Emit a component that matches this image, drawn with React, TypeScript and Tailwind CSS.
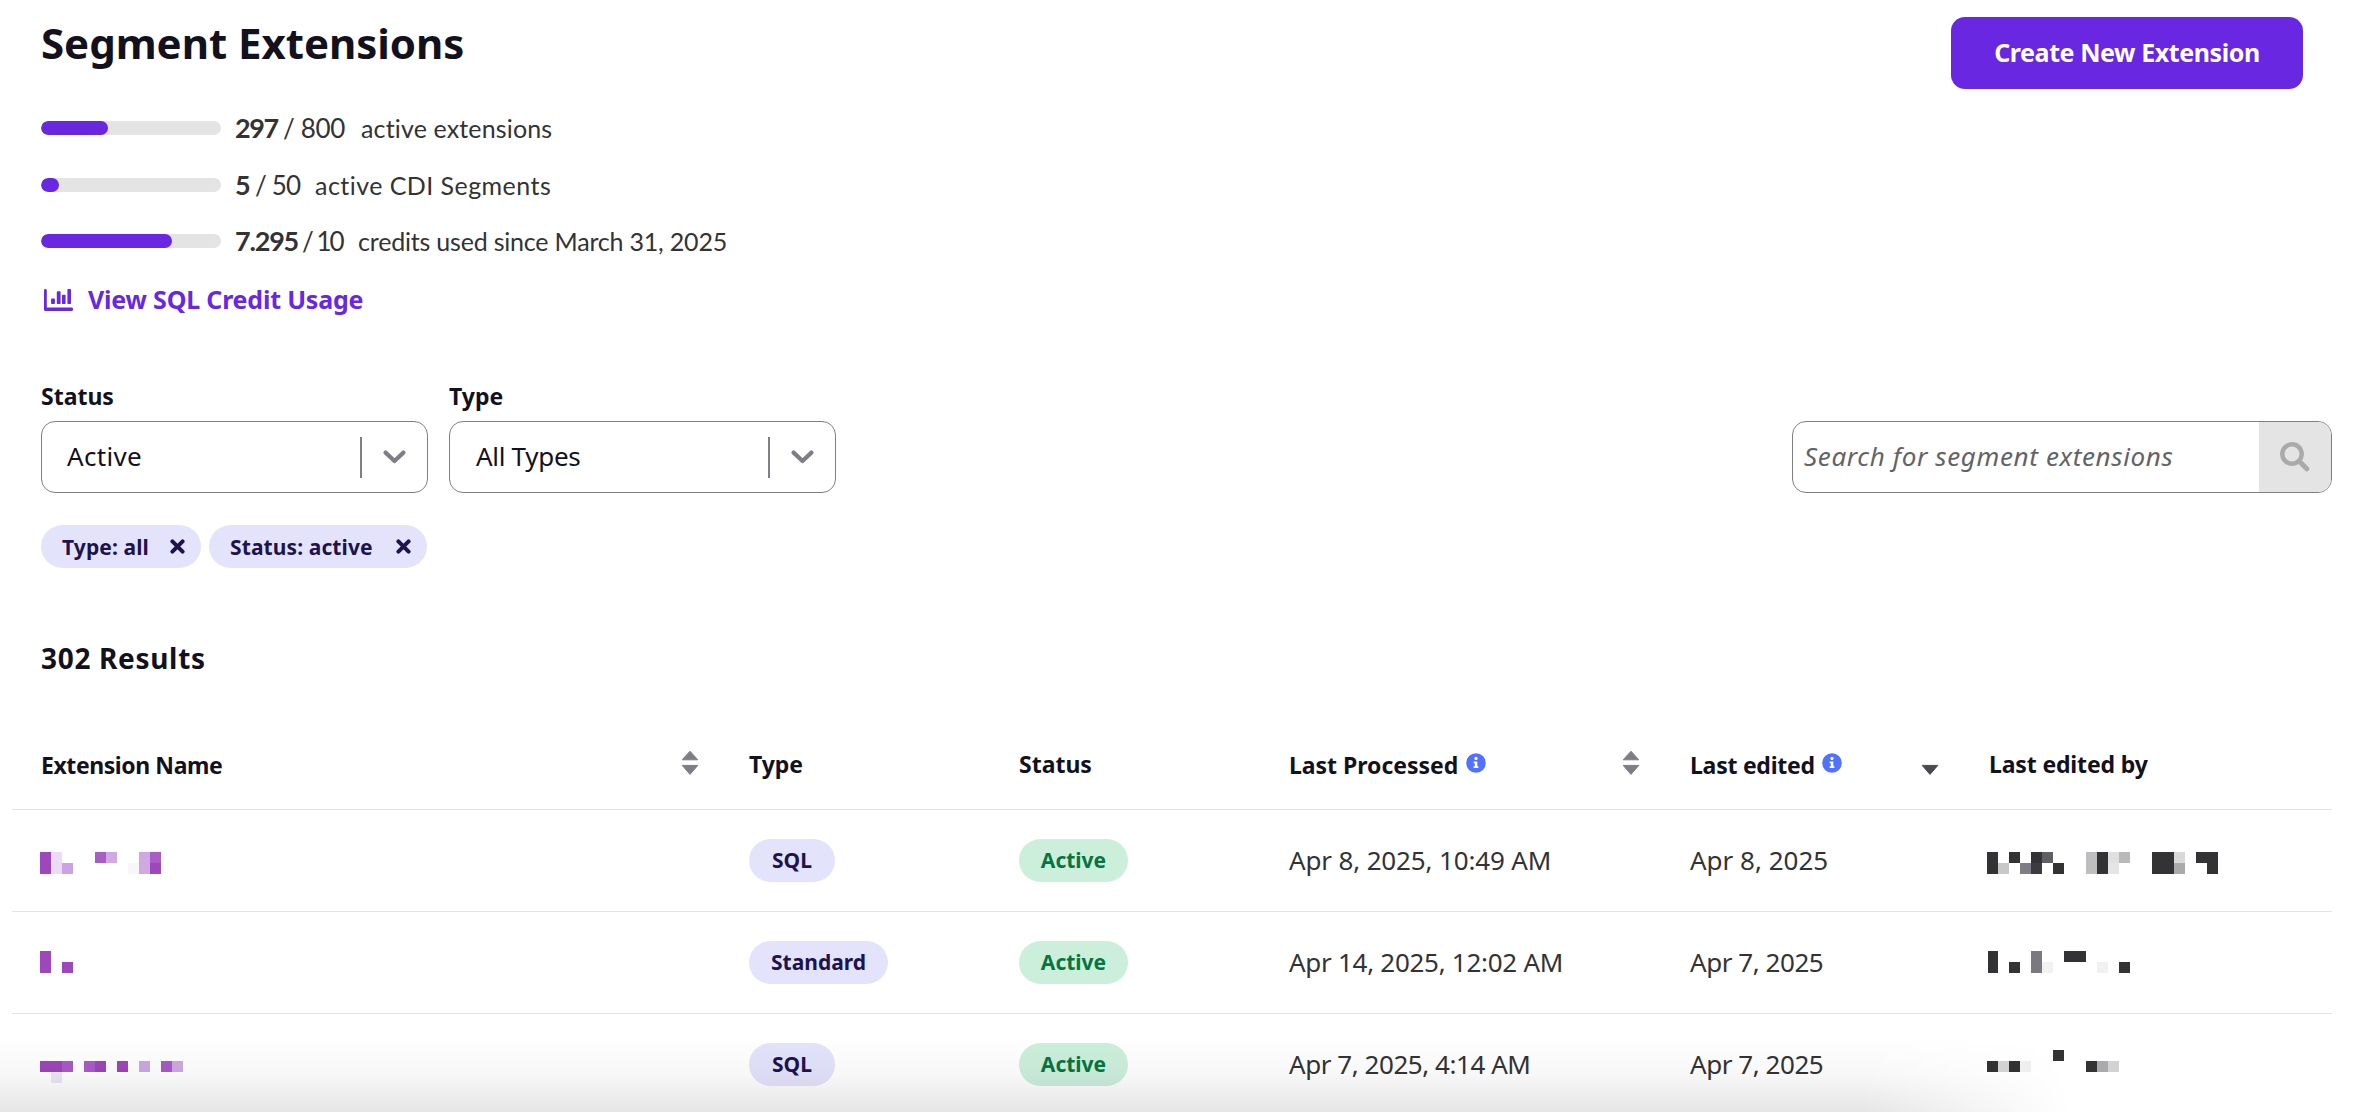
import clsx from "clsx";

type Block = [col: number, row: number, w: number, h: number, color: string];

type Extension = {
  name: Block[];
  type: string;
  status: string;
  processed: string;
  edited: string;
  editor: Block[];
  redactedClass: string;
  processedClass: string;
  editedClass: string;
};

const PURPLE = "#9e46bb";
const INK = "#333335";

const extensions: Extension[] = [
  {
    name: [
      [0, 0, 1, 2, PURPLE],
      [1, 0, 1, 2, "#ebdcf5"],
      [2, 1, 1, 1, "#cca2e6"],
      [5, 0, 1, 1, "#a95bc6"],
      [6, 0, 1, 1, "#d0a8e3"],
      [8, 1, 1, 1, "#f7f7f7"],
      [9, 0, 1, 2, "#d0a8e3"],
      [10, 0, 1, 1, "#a95bc6"],
      [10, 1, 1, 1, PURPLE],
    ],
    type: "SQL",
    status: "Active",
    processed: "Apr 8, 2025, 10:49 AM",
    edited: "Apr 8, 2025",
    editor: [
      [0, 0, 1, 2, INK],
      [1, 1, 1, 1, "#c8c8c8"],
      [2, 0, 1, 1, INK],
      [3, 1, 1, 1, "#7f7e86"],
      [4, 0, 1, 1, INK],
      [4, 1, 1, 1, "#3c3b40"],
      [5, 0, 1, 1, "#605f64"],
      [6, 1, 1, 1, INK],
      [9, 0, 1, 2, "#bebec0"],
      [10, 0, 1, 2, INK],
      [11, 0, 1, 1, "#e0e0e0"],
      [11, 1, 1, 1, "#e5e5e5"],
      [12, 0, 1, 1, "#b9b9bb"],
      [15, 0, 2, 2, INK],
      [17, 0, 1, 1, "#d9d9d9"],
      [17, 1, 1, 1, "#aaaaac"],
      [19, 0, 2, 1, INK],
      [20, 1, 1, 1, INK],
    ],
    redactedClass: "pt-4",
    processedClass: "tracking-[-0.15px]",
    editedClass: "tracking-normal",
  },
  {
    name: [
      [0, 0, 1, 2, PURPLE],
      [2, 1, 1, 1, PURPLE],
    ],
    type: "Standard",
    status: "Active",
    processed: "Apr 14, 2025, 12:02 AM",
    edited: "Apr 7, 2025",
    editor: [
      [0.1, 0, 0.9, 2, INK],
      [2, 1, 1, 1, INK],
      [4, 0, 1, 2, "#7a797f"],
      [5, 1, 1, 1, "#f1f1f1"],
      [7, 0, 2, 1, INK],
      [10, 1, 1, 1, "#f1f1f1"],
      [12, 1, 1, 1, INK],
    ],
    redactedClass: "pt-2.5",
    processedClass: "tracking-[-0.28px]",
    editedClass: "tracking-[-0.45px]",
  },
  {
    name: [
      [0, 1, 2, 1, PURPLE],
      [2, 1, 1, 1, "#a95bc6"],
      [1, 2, 1, 1, "#ebe7f4"],
      [4, 1, 1, 1, "#a95bc6"],
      [5, 1, 1, 1, PURPLE],
      [7, 1, 1, 1, PURPLE],
      [9, 1, 1, 1, "#cba8e4"],
      [11, 1, 1, 1, "#a95bc6"],
      [12, 1, 1, 1, "#d0a8e3"],
    ],
    type: "SQL",
    status: "Active",
    processed: "Apr 7, 2025, 4:14 AM",
    edited: "Apr 7, 2025",
    editor: [
      [0, 1, 1, 1, INK],
      [1, 1, 1, 1, "#d4d4d4"],
      [2, 1, 1, 1, INK],
      [3, 1, 1, 1, "#f0f0f0"],
      [6, 0, 1, 1, INK],
      [9, 1, 1, 1, INK],
      [10, 1, 1, 1, "#aaaaac"],
      [11, 1, 1, 1, "#d2d2d2"],
    ],
    redactedClass: "pt-1",
    processedClass: "tracking-[-0.45px]",
    editedClass: "tracking-[-0.45px]",
  },
];

const usage = [
  {
    used: "297",
    total: "/ 800",
    label: "active extensions",
    percent: 37.4,
    usedClass: "tracking-[-1.4px] w-[48px]",
    totalClass: "tracking-[-0.3px] w-[78px]",
    labelClass: "tracking-[0.15px]",
  },
  {
    used: "5",
    total: "/ 50",
    label: "active CDI Segments",
    percent: 10,
    usedClass: "w-[20px]",
    totalClass: "tracking-[-0.8px] w-[60px]",
    labelClass: "tracking-[0.45px]",
  },
  {
    used: "7.295",
    total: "/ 10",
    label: "credits used since March 31, 2025",
    percent: 73,
    usedClass: "tracking-[-1.2px] w-[67px]",
    totalClass: "tracking-[-2px] w-[56px]",
    labelClass: "tracking-[-0.2px]",
  },
];

// redacted value, drawn on a grid of 11px cells
function Redacted({ blocks }: { blocks: Block[] }) {
  return (
    <svg width="242" height="33" shapeRendering="crispEdges" className="block">
      {blocks.map(([col, row, w, h, color], i) => (
        <rect
          key={i}
          x={col * 11}
          y={row * 11}
          width={w * 11}
          height={h * 11}
          fill={color}
        />
      ))}
    </svg>
  );
}

function ChartIcon() {
  return (
    <svg width="29" height="22" viewBox="0 0 29 22" fill="#6927e2">
      <path d="M1.4 0A1.4 1.4 0 0 1 2.8 1.4V18.6H27.4A1.6 1.6 0 0 1 27.4 22H1.6A1.6 1.6 0 0 1 0 20.4V1.4A1.4 1.4 0 0 1 1.4 0Z" />
      <rect x="7.1" y="9.4" width="3.8" height="5.6" rx="0.8" />
      <rect x="12.8" y="2.2" width="3.8" height="12.8" rx="0.8" />
      <rect x="18" y="5.8" width="3.6" height="9.2" rx="0.8" />
      <rect x="23.4" y="0" width="3.6" height="15" rx="0.8" />
    </svg>
  );
}

function CloseIcon() {
  return (
    <svg width="15" height="15" viewBox="0 0 15 15" fill="none">
      <path
        d="M2.4 2.4L12.6 12.6M12.6 2.4L2.4 12.6"
        stroke="#20134d"
        strokeWidth="4"
        strokeLinecap="round"
      />
    </svg>
  );
}

function InfoIcon() {
  return (
    <svg width="20" height="20" viewBox="0 0 20 20" className="-mt-[2px]">
      <circle cx="10" cy="10" r="9.8" fill="#5271ff" />
      <circle cx="10" cy="5.4" r="1.6" fill="#fff" />
      <path d="M7.6 8.4H11.3V13.2H12.4V15H7.6V13.2H8.8V10.2H7.6Z" fill="#fff" />
    </svg>
  );
}

function SortIcon({ active }: { active?: boolean }) {
  return (
    <svg
      width="18"
      height="26"
      viewBox="0 0 18 26"
      strokeLinejoin="round"
      className="-mt-[2px]"
    >
      {!active && (
        <path d="M9 1.2L16.8 9.8H1.2Z" fill="#7f7e86" stroke="#7f7e86" />
      )}
      <path
        d="M9 24.4L1.2 15.4H16.8Z"
        fill={active ? "#4a4950" : "#7f7e86"}
        stroke={active ? "#4a4950" : "#7f7e86"}
      />
    </svg>
  );
}

function Select({ label, value }: { label: string; value: string }) {
  return (
    <div className="w-[387px]">
      <div className="h-[42px] pt-px text-[23px] leading-8 font-bold">
        {label}
      </div>
      <div className="flex h-[72px] items-center rounded-[14px] border border-[#7f7e86] pl-[25px]">
        <span
          className={clsx(
            "flex-1 pb-[2px] text-[26px] leading-[68px]",
            value === "Active"
              ? "tracking-[0.3px]"
              : "pl-px tracking-[-0.3px]",
          )}
        >
          {value}
        </span>
        <span className="h-[41px] w-[2px] bg-[#7f7e86]" />
        <span className="flex w-[65px] justify-center">
          <svg width="23" height="14" viewBox="0 0 23 14" fill="none">
            <path
              d="M2.6 2.6L11.5 11L20.4 2.6"
              stroke="#7f7e86"
              strokeWidth="4.2"
              strokeLinecap="round"
              strokeLinejoin="round"
            />
          </svg>
        </span>
      </div>
    </div>
  );
}

function Chip({ label, className }: { label: string; className: string }) {
  return (
    <span
      className={clsx(
        "flex h-[43px] items-center justify-between rounded-full bg-[#e4e3fc] pr-4 pl-[21px] text-[21px] leading-[41px] font-bold tracking-[0.1px] text-[#20134d]",
        className,
      )}
    >
      <span className="pt-[2px] whitespace-nowrap">{label}</span>
      <CloseIcon />
    </span>
  );
}

function Badge({ label }: { label: string }) {
  return (
    <span
      className={clsx(
        "inline-flex h-[43px] items-center justify-center rounded-full text-[21px] font-bold tracking-normal",
        label === "SQL" && "w-[86px] bg-[#e4e3fc] text-[#20134d]",
        label === "Standard" && "w-[139px] bg-[#e4e3fc] text-[#20134d]",
        label === "Active" && "w-[109px] bg-[#ccefdc] text-[#07753f]",
      )}
    >
      {label}
    </span>
  );
}

const columns =
  "grid grid-cols-[708px_270px_270px_401px_299px_1fr] items-center border-b border-[#e3e3e4] pl-[29px]";

export default function App() {
  return (
    <main className="relative h-[1112px] w-[2364px] overflow-hidden bg-white font-['Noto_Sans',sans-serif] text-[#12111c]">
      <header className="flex h-[100px] items-start justify-between pt-[17px] pr-[61px] pl-[41px]">
        <h1 className="mt-[2px] text-[42px] leading-[48px] font-bold tracking-[-0.03px]">
          Segment Extensions
        </h1>
        <button className="h-[72px] w-[352px] rounded-[14px] bg-[#6927e2] pb-px text-[25px] font-bold tracking-[-0.42px] text-white">
          Create New Extension
        </button>
      </header>

      <section className="pl-[41px] font-['Lato',sans-serif] text-[#333335]">
        {usage.map((item) => (
          <div key={item.used} className="flex h-[56.5px] items-center">
            <div className="h-[14px] w-[180px] overflow-hidden rounded-full bg-[#e4e4e4]">
              <div
                className="h-full rounded-full bg-[#6927e2]"
                style={{ width: `${item.percent}%` }}
              />
            </div>
            <div className="ml-[14px] flex items-baseline text-[26px] leading-8 whitespace-nowrap">
              <span className={clsx("text-[27px] font-bold", item.usedClass)}>
                {item.used}
              </span>
              <span className={item.totalClass}>{item.total}</span>
              <span className={clsx("text-[25px]", item.labelClass)}>
                {item.label}
              </span>
            </div>
          </div>
        ))}
      </section>

      <a className="ml-[44px] flex h-[60px] items-center gap-[15px] pt-px text-[25px] font-bold tracking-[-0.2px] text-[#6927e2]">
        <ChartIcon />
        View SQL Credit Usage
      </a>

      <section className="mt-[49.5px] flex items-end justify-between pr-8 pl-[41px]">
        <div className="flex gap-[21px]">
          <Select label="Status" value="Active" />
          <Select label="Type" value="All Types" />
        </div>
        <div className="flex h-[72px] w-[540px] overflow-hidden rounded-[14px] border border-[#7f7e86]">
          <input
            className="min-w-0 flex-1 pb-[2px] pl-[11px] text-[26px] tracking-[0.64px] italic placeholder:text-[#636269]"
            placeholder="Search for segment extensions"
          />
          <span className="flex w-[72px] items-center justify-center bg-[#e4e4e4]">
            <svg width="30" height="30" viewBox="0 0 30 30" fill="none">
              <circle cx="12" cy="12" r="9.7" stroke="#aaaaac" strokeWidth="4.4" />
              <path
                d="M19.5 19.5L26.8 26.8"
                stroke="#aaaaac"
                strokeWidth="5"
                strokeLinecap="round"
              />
            </svg>
          </span>
        </div>
      </section>

      <div className="mt-8 flex gap-2 pl-[41px]">
        <Chip label="Type: all" className="w-[160px]" />
        <Chip label="Status: active" className="w-[218px]" />
      </div>

      <h2 className="mt-[70px] h-[80px] pl-[41px] text-[28px] leading-10 font-bold tracking-[0.68px]">
        302 Results
      </h2>

      <section className="mr-8 ml-3">
        <div
          className={clsx(
            columns,
            "h-[92px] text-[23px] leading-8 font-bold whitespace-nowrap",
          )}
        >
          <div className="flex items-center justify-between pr-[50px]">
            <span className="pt-[2px] tracking-[-0.42px]">Extension Name</span>
            <SortIcon />
          </div>
          <span className="tracking-[-0.1px]">Type</span>
          <span>Status</span>
          <div className="flex items-center pr-[50px]">
            <span className="w-[177px] pt-[2px] tracking-[-0.02px]">
              Last Processed
            </span>
            <InfoIcon />
            <span className="ml-auto">
              <SortIcon />
            </span>
          </div>
          <div className="flex items-center pr-[50px]">
            <span className="w-[132px] pt-[2px] tracking-[-0.25px]">
              Last edited
            </span>
            <InfoIcon />
            <span className="ml-auto">
              <SortIcon active />
            </span>
          </div>
          <span className="tracking-[-0.15px]">Last edited by</span>
        </div>

        {extensions.map((ext, i) => (
          <div
            key={i}
            className={clsx(columns, "h-[102px] text-[26px] text-[#333335]")}
          >
            <div className={clsx("-ml-px", ext.redactedClass)}>
              <Redacted blocks={ext.name} />
            </div>
            <div className="flex">
              <Badge label={ext.type} />
            </div>
            <div className="flex">
              <Badge label={ext.status} />
            </div>
            <span className={ext.processedClass}>{ext.processed}</span>
            <span className={ext.editedClass}>{ext.edited}</span>
            <div className={clsx("-ml-[2px]", ext.redactedClass)}>
              <Redacted blocks={ext.editor} />
            </div>
          </div>
        ))}
      </section>

      {/* soft shadow of the bar that sits just below the viewport */}
      <div className="pointer-events-none absolute bottom-0 left-0 h-[75px] w-[2070px] bg-linear-to-b from-black/0 via-black/3 to-black/10 [mask-image:linear-gradient(to_right,black_90%,transparent)]" />
    </main>
  );
}
